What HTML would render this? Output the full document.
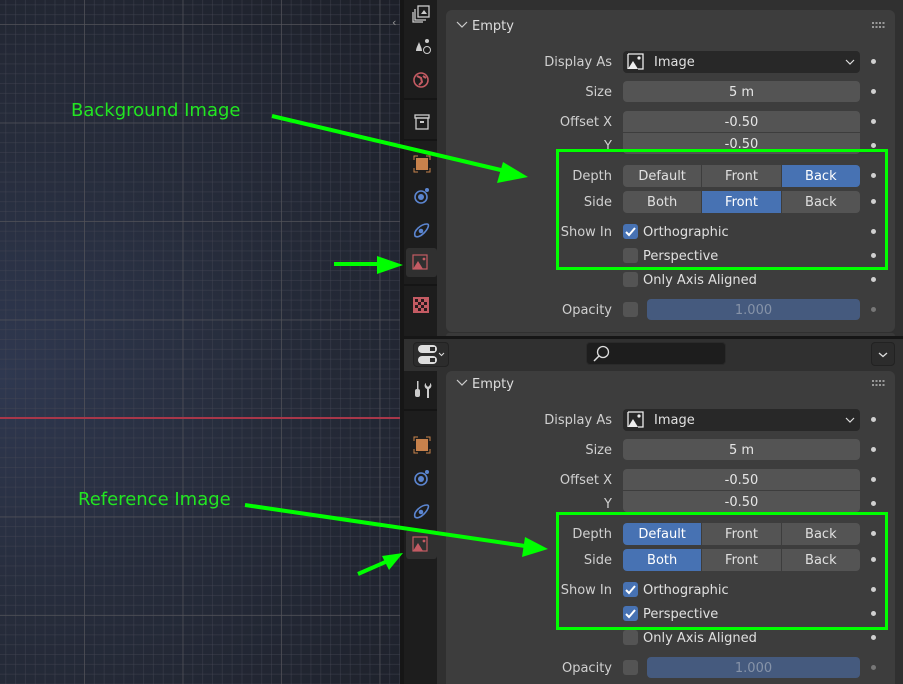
<!DOCTYPE html>
<html><head><meta charset="utf-8"><style>
*{margin:0;padding:0;box-sizing:border-box}
html,body{width:903px;height:684px;overflow:hidden}
body{position:relative;background:#303030;font-family:"DejaVu Sans","Liberation Sans",sans-serif;font-size:13px;color:#e0e0e0}
.a{position:absolute}
.t{margin-top:2px}
#vp{left:0;top:0;width:400px;height:684px;
background:
linear-gradient(90deg,rgba(85,85,90,.6) 1px,transparent 1px) 84px 0/98.5px 98.5px,
linear-gradient(0deg,rgba(85,85,90,.6) 1px,transparent 1px) 0 25px/98.5px 98.5px,
linear-gradient(90deg,rgba(70,72,85,.4) 1px,transparent 1px) 84px 0/9.85px 9.85px,
linear-gradient(0deg,rgba(70,72,85,.4) 1px,transparent 1px) 0 25px/9.85px 9.85px,
radial-gradient(ellipse at 0% 55%,#2f3850 0%,#262c3b 45%,#1d2029 100%);}
.lbl{position:absolute;width:160px;text-align:right;color:#d0d0d0;margin-top:2px}
.fld{position:absolute;height:21px;background:#545454;border-radius:4px;text-align:center;line-height:23px;color:#e6e6e6}
.dot{position:absolute;width:5px;height:5px;border-radius:50%;background:#d0d0d0}
.cb{position:absolute;width:15px;height:15px;border-radius:3px;background:#545454}
.cb.on{background:#4772b3}
.seg{position:absolute;height:22px;display:flex;border-radius:4px;overflow:hidden;left:623px;width:237px}
.seg div{flex:1;background:#545454;text-align:center;line-height:24px;color:#e0e0e0;margin-right:1px}
.seg div:last-child{margin-right:0}
.seg .on{background:#4772b3;color:#fff}
.panel{position:absolute;left:446px;width:449px;background:#3d3d3d;border-radius:6px}
.gbox{position:absolute;border:3px solid #00ff00}
.tab{position:absolute;left:404px;width:33px;background:#1d1d1d}
</style></head><body>
<div id="vp" class="a"></div>
<div class="a" style="left:0;top:417px;width:400px;height:2px;background:#a8374a"></div>
<div class="a" style="left:392px;top:16px;color:#999;font-size:11px">‹</div>
<div class="a" style="left:400px;top:0;width:4px;height:684px;background:#161616"></div>
<div class="tab" style="top:0;height:336px"></div>
<div class="tab" style="top:371px;height:313px"></div>
<div class="a" style="left:404px;top:336px;width:499px;height:3px;background:#161616"></div>

<svg class="a" style="left:404px;top:0" width="33" height="336">
<g fill="none" stroke="#ccc" stroke-width="1.3">
<rect x="14" y="6" width="11" height="11"/><path d="M11 9v11h11M9 12v10h10"/></g>
<path d="M17 14l3-4 3 4z" fill="#ccc"/>
<path d="M12 51c0-3 2-6 3-9 1 3 3 6 3 9z" fill="#ccc"/><circle cx="23" cy="50" r="3.5" fill="none" stroke="#ccc"/><circle cx="23" cy="41" r="2" fill="#ccc"/>
<circle cx="17" cy="80" r="7" fill="none" stroke="#c45b63" stroke-width="1.6"/><path d="M13 76l4 2 1 4-3 3M19 76l3 2" stroke="#c45b63" stroke-width="2" fill="none"/>
<rect x="0" y="98" width="33" height="2" fill="#151515"/>
<g fill="none" stroke="#ccc" stroke-width="1.3"><rect x="11" y="115" width="14" height="3"/><rect x="12" y="118" width="12" height="11"/></g><rect x="16" y="121" width="4" height="2" fill="#ccc"/>
<rect x="0" y="139" width="33" height="2" fill="#151515"/>
<rect x="12" y="158" width="12" height="12" fill="#c8824c"/><path d="M10 160v-4h4M22 156h4v4M26 168v4h-4M14 172h-4v-4" stroke="#c8824c" fill="none"/>
<circle cx="17" cy="197" r="6" fill="none" stroke="#5b85d0" stroke-width="1.6"/><circle cx="17" cy="197" r="3" fill="#5b85d0"/><circle cx="23" cy="190" r="2" fill="#5b85d0"/>
<path d="M11 236c-2-5 6-12 12-12 3 0 1 5-3 9-3 3-7 5-9 3z" fill="none" stroke="#5b85d0" stroke-width="1.6"/><circle cx="17" cy="231" r="2.3" fill="#5b85d0"/>
<rect x="2" y="248" width="31" height="29" rx="3" fill="#303030"/>
<rect x="9" y="255" width="14" height="14" fill="none" stroke="#c45b63" stroke-width="1.2"/><path d="M9 269l5-8 5 8z" fill="#c45b63"/><circle cx="20" cy="259" r="1.4" fill="#c45b63"/>
<rect x="0" y="284" width="33" height="2" fill="#151515"/>
<g fill="#c45b63"><rect x="9" y="297" width="16" height="16"/></g>
<g fill="#2a1a1d"><rect x="11" y="299" width="3" height="3"/><rect x="17" y="299" width="3" height="3"/><rect x="14" y="302" width="3" height="3"/><rect x="20" y="302" width="3" height="3"/><rect x="11" y="305" width="3" height="3"/><rect x="17" y="305" width="3" height="3"/><rect x="14" y="308" width="3" height="3"/><rect x="20" y="308" width="3" height="3"/></g>
</svg>
<svg class="a" style="left:404px;top:371px" width="33" height="313">
<rect x="13" y="10" width="1.5" height="8" fill="#ccc"/><rect x="11" y="18" width="5" height="8" rx="2" fill="#ccc"/>
<path d="M22 12v2l2 2 2-2v-2c2 1 2 5 -1 6v9h-2v-9c-3-1-3-5-1-6z" fill="#ccc"/>
<rect x="0" y="38" width="33" height="2" fill="#151515"/>
<rect x="12" y="68" width="12" height="12" fill="#c8824c"/><path d="M10 70v-4h4M22 66h4v4M26 78v4h-4M14 82h-4v-4" stroke="#c8824c" fill="none"/>
<circle cx="17" cy="108" r="6" fill="none" stroke="#5b85d0" stroke-width="1.6"/><circle cx="17" cy="108" r="3" fill="#5b85d0"/><circle cx="23" cy="101" r="2" fill="#5b85d0"/>
<path d="M11 146c-2-5 6-12 12-12 3 0 1 5-3 9-3 3-7 5-9 3z" fill="none" stroke="#5b85d0" stroke-width="1.6"/><circle cx="17" cy="141" r="2.3" fill="#5b85d0"/>
<rect x="2" y="159" width="31" height="29" rx="3" fill="#303030"/>
<rect x="9" y="166" width="14" height="14" fill="none" stroke="#c45b63" stroke-width="1.2"/><path d="M9 180l5-8 5 8z" fill="#c45b63"/><circle cx="20" cy="170" r="1.4" fill="#c45b63"/>
</svg>

<div class="a" style="left:413px;top:342px;width:36px;height:25px;border-radius:4px;background:#2c2c2c;border:1px solid #222"></div>
<svg class="a" style="left:413px;top:342px" width="36" height="25"><rect x="5" y="3" width="19" height="8" rx="4" fill="#ddd"/><rect x="5" y="14" width="19" height="8" rx="4" fill="#ddd"/><rect x="17" y="5" width="5" height="4" fill="#2c2c2c"/><rect x="17" y="16" width="5" height="4" fill="#2c2c2c"/><path d="M26 11l2.5 2.5 2.5-2.5" stroke="#ddd" fill="none"/></svg>
<div class="a" style="left:586px;top:342px;width:140px;height:23px;border-radius:4px;background:#1d1d1d;border:1px solid #2a2a2a"></div>
<svg class="a" style="left:590px;top:343px" width="24" height="22"><circle cx="13" cy="9" r="5.5" fill="none" stroke="#ddd" stroke-width="1.3"/><path d="M9 13l-5 5" stroke="#ddd" stroke-width="1.5"/></svg>
<div class="a" style="left:871px;top:342px;width:24px;height:24px;border-radius:4px;background:#2c2c2c;border:1px solid #222"></div>
<svg class="a" style="left:871px;top:342px" width="24" height="24"><path d="M8 11l4 3.5 4-3.5" stroke="#ddd" fill="none" stroke-width="1.3"/></svg>

<div class="panel" style="top:10px;height:322px"></div>
<div class="a" style="left:446px;top:333px;width:449px;height:3px;background:#3a3a3a;border-radius:4px 4px 0 0"></div>
<div class="panel" style="top:371px;height:320px"></div>

<svg class="a" style="left:456px;top:20px" width="12" height="10"><path d="M1 2l5 5 5-5" stroke="#ccc" fill="none" stroke-width="1.2"/></svg>
<div class="a t" style="left:472px;top:17px;color:#ddd">Empty</div>
<div class="a" style="left:872px;top:22px;width:14px;height:6px;background:repeating-linear-gradient(90deg,#999 0 2px,transparent 2px 3.5px);-webkit-mask:linear-gradient(#000 0 2px,transparent 2px 4px,#000 4px 6px)"></div>

<div class="lbl" style="left:452px;top:53px">Display As</div>
<div class="a" style="left:623px;top:51px;width:237px;height:22px;background:#282828;border-radius:4px"></div>
<svg class="a" style="left:627px;top:53px" width="18" height="18"><path d="M1 1h15v15H11" fill="none" stroke="#eee" stroke-width="1.3"/><path d="M1 1v15" stroke="#eee" stroke-width="1.3"/><path d="M1 16l5-8 5 8z" fill="#eee"/><circle cx="12" cy="5" r="1.6" fill="#eee"/></svg>
<div class="a t" style="left:654px;top:53px">Image</div>
<svg class="a" style="left:845px;top:58px" width="10" height="8"><path d="M1 2l4 4 4-4" stroke="#ddd" fill="none" stroke-width="1.2"/></svg>
<div class="dot" style="left:871px;top:59px"></div>

<div class="lbl" style="left:452px;top:83px">Size</div>
<div class="fld" style="left:623px;top:81px;width:237px">5 m</div>
<div class="dot" style="left:871px;top:89px"></div>
<div class="lbl" style="left:452px;top:113px">Offset X</div>
<div class="fld" style="left:623px;top:111px;width:237px;border-radius:4px 4px 0 0">-0.50</div>
<div class="fld" style="left:623px;top:133px;width:237px;border-radius:0 0 4px 4px">-0.50</div>
<div class="lbl" style="left:452px;top:137px">Y</div>
<div class="dot" style="left:871px;top:119px"></div>
<div class="dot" style="left:871px;top:143px"></div>

<div class="lbl" style="left:452px;top:167px">Depth</div>
<div class="seg" style="top:165px"><div>Default</div><div>Front</div><div class="on">Back</div></div>
<div class="dot" style="left:871px;top:173px"></div>
<div class="lbl" style="left:452px;top:193px">Side</div>
<div class="seg" style="top:191px"><div>Both</div><div class="on">Front</div><div>Back</div></div>
<div class="dot" style="left:871px;top:199px"></div>
<div class="lbl" style="left:452px;top:223px">Show In</div>
<div class="cb on" style="left:623px;top:224px"></div>
<svg class="a" style="left:623px;top:224px" width="15" height="15"><path d="M3 8l3 3 6-7" stroke="#fff" stroke-width="2" fill="none"/></svg>
<div class="a t" style="left:643px;top:223px">Orthographic</div>
<div class="dot" style="left:871px;top:229px"></div>
<div class="cb" style="left:623px;top:248px"></div>
<div class="a t" style="left:643px;top:247px">Perspective</div>
<div class="dot" style="left:871px;top:253px"></div>
<div class="cb" style="left:623px;top:272px"></div>
<div class="a t" style="left:643px;top:271px">Only Axis Aligned</div>
<div class="dot" style="left:871px;top:277px"></div>
<div class="lbl" style="left:452px;top:301px">Opacity</div>
<div class="cb" style="left:623px;top:302px"></div>
<div class="fld" style="left:647px;top:299px;width:213px;background:#455a7e;color:#8693a8">1.000</div>
<div class="dot" style="left:871px;top:307px;background:#777"></div>

<svg class="a" style="left:456px;top:378px" width="12" height="10"><path d="M1 2l5 5 5-5" stroke="#ccc" fill="none" stroke-width="1.2"/></svg>
<div class="a t" style="left:472px;top:375px;color:#ddd">Empty</div>
<div class="a" style="left:872px;top:380px;width:14px;height:6px;background:repeating-linear-gradient(90deg,#999 0 2px,transparent 2px 3.5px);-webkit-mask:linear-gradient(#000 0 2px,transparent 2px 4px,#000 4px 6px)"></div>
<div class="lbl" style="left:452px;top:411px">Display As</div>
<div class="a" style="left:623px;top:409px;width:237px;height:22px;background:#282828;border-radius:4px"></div>
<svg class="a" style="left:627px;top:411px" width="18" height="18"><path d="M1 1h15v15H11" fill="none" stroke="#eee" stroke-width="1.3"/><path d="M1 1v15" stroke="#eee" stroke-width="1.3"/><path d="M1 16l5-8 5 8z" fill="#eee"/><circle cx="12" cy="5" r="1.6" fill="#eee"/></svg>
<div class="a t" style="left:654px;top:411px">Image</div>
<svg class="a" style="left:845px;top:416px" width="10" height="8"><path d="M1 2l4 4 4-4" stroke="#ddd" fill="none" stroke-width="1.2"/></svg>
<div class="dot" style="left:871px;top:417px"></div>
<div class="lbl" style="left:452px;top:441px">Size</div>
<div class="fld" style="left:623px;top:439px;width:237px">5 m</div>
<div class="dot" style="left:871px;top:447px"></div>
<div class="lbl" style="left:452px;top:471px">Offset X</div>
<div class="fld" style="left:623px;top:469px;width:237px;border-radius:4px 4px 0 0">-0.50</div>
<div class="fld" style="left:623px;top:491px;width:237px;border-radius:0 0 4px 4px">-0.50</div>
<div class="lbl" style="left:452px;top:495px">Y</div>
<div class="dot" style="left:871px;top:477px"></div>
<div class="dot" style="left:871px;top:501px"></div>
<div class="lbl" style="left:452px;top:525px">Depth</div>
<div class="seg" style="top:523px"><div class="on">Default</div><div>Front</div><div>Back</div></div>
<div class="dot" style="left:871px;top:531px"></div>
<div class="lbl" style="left:452px;top:551px">Side</div>
<div class="seg" style="top:549px"><div class="on">Both</div><div>Front</div><div>Back</div></div>
<div class="dot" style="left:871px;top:557px"></div>
<div class="lbl" style="left:452px;top:581px">Show In</div>
<div class="cb on" style="left:623px;top:582px"></div>
<svg class="a" style="left:623px;top:582px" width="15" height="15"><path d="M3 8l3 3 6-7" stroke="#fff" stroke-width="2" fill="none"/></svg>
<div class="a t" style="left:643px;top:581px">Orthographic</div>
<div class="dot" style="left:871px;top:587px"></div>
<div class="cb on" style="left:623px;top:606px"></div>
<svg class="a" style="left:623px;top:606px" width="15" height="15"><path d="M3 8l3 3 6-7" stroke="#fff" stroke-width="2" fill="none"/></svg>
<div class="a t" style="left:643px;top:605px">Perspective</div>
<div class="dot" style="left:871px;top:611px"></div>
<div class="cb" style="left:623px;top:630px"></div>
<div class="a t" style="left:643px;top:629px">Only Axis Aligned</div>
<div class="dot" style="left:871px;top:635px"></div>
<div class="lbl" style="left:452px;top:659px">Opacity</div>
<div class="cb" style="left:623px;top:660px"></div>
<div class="fld" style="left:647px;top:657px;width:213px;background:#455a7e;color:#8693a8">1.000</div>
<div class="dot" style="left:871px;top:665px;background:#777"></div>

<div class="gbox" style="left:556px;top:149px;width:332px;height:121px"></div>
<div class="gbox" style="left:556px;top:512px;width:332px;height:118px"></div>
<div class="a" style="left:71px;top:100px;color:#22e622;font-size:18px">Background Image</div>
<div class="a" style="left:78px;top:489px;color:#22e622;font-size:18px">Reference Image</div>
<svg class="a" style="left:0;top:0" width="903" height="684">
<g stroke="#00ff00" stroke-width="4" fill="#00ff00">
<line x1="272" y1="116" x2="505" y2="171"/><path d="M528 177L497 183L503 162Z" stroke="none"/>
<line x1="334" y1="264" x2="380" y2="264"/><path d="M403 265L377 274L377 256Z" stroke="none"/>
<line x1="245" y1="505" x2="525" y2="546"/><path d="M548 549L522 557L525 537Z" stroke="none"/>
<line x1="358" y1="574" x2="390" y2="560"/><path d="M403 553L389 570L382 556Z" stroke="none"/>
</g></svg>
</body></html>
